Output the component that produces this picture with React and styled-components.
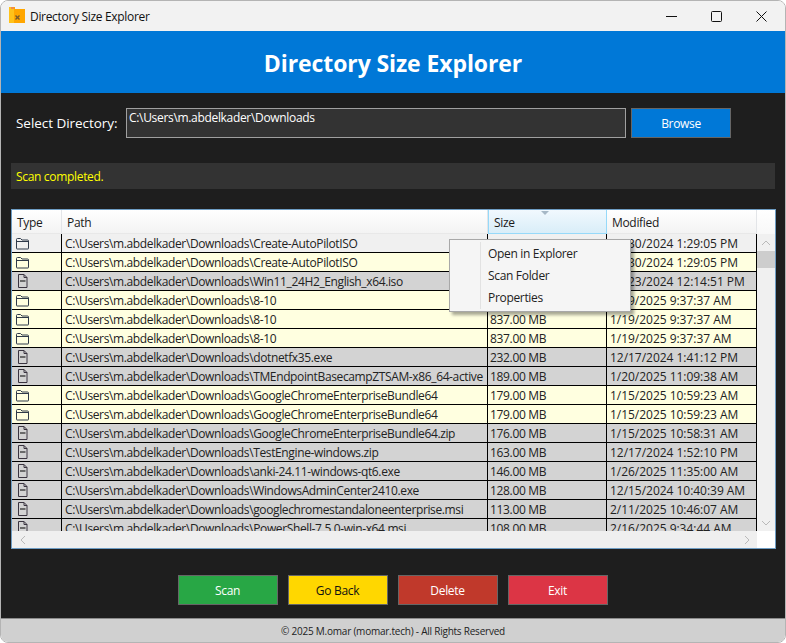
import React from "react";
import styled, { createGlobalStyle } from "styled-components";

const GlobalStyle = createGlobalStyle`
  html, body {
    margin: 0;
    padding: 0;
    background: #ffffff;
  }
  * {
    box-sizing: border-box;
  }
`;

const BASE = "C:\\Users\\m.abdelkader\\Downloads\\";

const rows = [
  { type: "folder", name: "Create-AutoPilotISO", size: "", date: "12/30/2024 1:29:05 PM", first: true },
  { type: "folder", name: "Create-AutoPilotISO", size: "", date: "12/30/2024 1:29:05 PM" },
  { type: "file", name: "Win11_24H2_English_x64.iso", size: "", date: "11/23/2024 12:14:51 PM" },
  { type: "folder", name: "8-10", size: "837.00 MB", date: "1/19/2025 9:37:37 AM" },
  { type: "folder", name: "8-10", size: "837.00 MB", date: "1/19/2025 9:37:37 AM" },
  { type: "folder", name: "8-10", size: "837.00 MB", date: "1/19/2025 9:37:37 AM" },
  { type: "file", name: "dotnetfx35.exe", size: "232.00 MB", date: "12/17/2024 1:41:12 PM" },
  { type: "file", name: "TMEndpointBasecampZTSAM-x86_64-active", size: "189.00 MB", date: "1/20/2025 11:09:38 AM" },
  { type: "folder", name: "GoogleChromeEnterpriseBundle64", size: "179.00 MB", date: "1/15/2025 10:59:23 AM" },
  { type: "folder", name: "GoogleChromeEnterpriseBundle64", size: "179.00 MB", date: "1/15/2025 10:59:23 AM" },
  { type: "file", name: "GoogleChromeEnterpriseBundle64.zip", size: "176.00 MB", date: "1/15/2025 10:58:31 AM" },
  { type: "file", name: "TestEngine-windows.zip", size: "163.00 MB", date: "12/17/2024 1:52:10 PM" },
  { type: "file", name: "anki-24.11-windows-qt6.exe", size: "146.00 MB", date: "1/26/2025 11:35:00 AM" },
  { type: "file", name: "WindowsAdminCenter2410.exe", size: "128.00 MB", date: "12/15/2024 10:40:39 AM" },
  { type: "file", name: "googlechromestandaloneenterprise.msi", size: "113.00 MB", date: "2/11/2025 10:46:07 AM" },
  { type: "file", name: "PowerShell-7.5.0-win-x64.msi", size: "108.00 MB", date: "2/16/2025 9:34:44 AM" },
];

const Window = styled.div`
  position: relative;
  width: 786px;
  height: 643px;
  display: flex;
  flex-direction: column;
  overflow: hidden;
  border: 1px solid #b4b4b4;
  border-radius: 8px;
  font-family: "Open Sans", "Noto Sans", sans-serif;
  font-size: 12px;
  letter-spacing: -0.32px;
`;

const TitleBar = styled.div`
  height: 30px;
  flex: none;
  display: flex;
  align-items: center;
  padding-left: 8px;
  background: #f2f2f2;
  color: #111;
`;

const TitleIcon = styled.svg`
  margin-top: -2px;
`;

const TitleText = styled.span`
  margin-left: 5px;
  font-size: 12px;
`;

const Controls = styled.div`
  margin-left: auto;
  display: flex;
  height: 100%;
  padding-right: 1px;
`;

const Control = styled.div`
  width: 45px;
  height: 30px;
  display: flex;
  align-items: center;
  justify-content: center;
`;

const Banner = styled.div`
  height: 62px;
  flex: none;
  display: flex;
  align-items: center;
  justify-content: center;
  padding-top: 2px;
  background: #0078d7;
  color: #fff;
  font-size: 23px;
  font-weight: 700;
  letter-spacing: -0.1px;
`;

const Main = styled.div`
  flex: 1;
  display: flex;
  flex-direction: column;
  min-height: 0;
  padding: 15px 10px 0;
  background: #1e1e1e;
`;

const PickerRow = styled.div`
  display: flex;
  align-items: center;
  height: 30px;
`;

const PickerLabel = styled.label`
  width: 115px;
  padding-left: 5px;
  color: #fff;
  font-size: 13.5px;
  letter-spacing: -0.05px;
`;

const PathInput = styled.div`
  width: 500px;
  height: 30px;
  padding: 0 2px;
  background: #333;
  border: 1px solid #a0a0a0;
  color: #fff;
`;

const Button = styled.button`
  width: 100px;
  height: 30px;
  padding: 0;
  background: ${(p) => p.$bg};
  border: 1px solid #666;
  color: ${(p) => p.$fg || "#fff"};
  font: inherit;
  letter-spacing: inherit;
`;

const BrowseButton = styled(Button)`
  margin-left: 5px;
  padding-top: 1px;
`;

const StatusBar = styled.div`
  height: 26px;
  margin-top: 25px;
  display: flex;
  align-items: center;
  padding-left: 5px;
  background: #333;
  color: #ffff00;
`;

const TableFrame = styled.div`
  height: 340px;
  width: 765px;
  margin-top: 20px;
  display: flex;
  flex-direction: column;
  background: #fff;
  border: 1px solid #6e9dc4;
`;

const HeaderRow = styled.div`
  height: 24px;
  flex: none;
  display: flex;
`;

const HeaderCell = styled.div`
  position: relative;
  width: ${(p) => p.$w}px;
  flex: none;
  display: flex;
  align-items: center;
  padding: 1px 0 0 5px;
  color: #1a1a1a;
  background: ${(p) =>
    p.$active
      ? "linear-gradient(#f1f9fe, #d9edf8)"
      : "linear-gradient(#ffffff, #f3f3f3)"};
  border-right: 1px solid ${(p) => (p.$active ? "#96d9f9" : "#e3e5e8")};
  border-left: ${(p) => (p.$active ? "1px solid #96d9f9" : "none")};
  border-bottom: 1px solid ${(p) => (p.$active ? "#96d9f9" : "#e8e8e8")};
`;

const SortArrow = styled.span`
  position: absolute;
  top: 1px;
  left: 52px;
  width: 0;
  height: 0;
  border-left: 4px solid transparent;
  border-right: 4px solid transparent;
  border-top: 4px solid #a6b8c6;
`;

const HeaderFiller = styled.div`
  flex: 1;
  background: linear-gradient(#ffffff, #f8f8f8);
`;

const BodyArea = styled.div`
  flex: 1;
  min-height: 0;
  display: flex;
`;

const RowsClip = styled.div`
  width: 745px;
  flex: none;
  overflow: hidden;
`;

const Row = styled.div`
  height: 19px;
  display: flex;
  color: #222;
  border-bottom: 1px solid #000;
  background: ${(p) =>
    p.$first ? "#f0f0f0" : p.$type === "folder" ? "#ffffe0" : "#d3d3d3"};
`;

const Cell = styled.div`
  width: ${(p) => p.$w}px;
  flex: none;
  display: flex;
  align-items: center;
  padding-left: ${(p) => p.$pad}px;
  overflow: hidden;
  white-space: nowrap;
  border-right: 1px solid #000;
`;

const PathCell = styled(Cell)`
  letter-spacing: -0.37px;
`;

const DateCell = styled(Cell)`
  letter-spacing: -0.03px;
`;

const VScroll = styled.div`
  flex: 1;
  display: flex;
  flex-direction: column;
  align-items: stretch;
  background: #f0f0f0;
`;

const ScrollThumb = styled.div`
  height: 17px;
  background: #cdcdcd;
`;

const ScrollButton = styled.div`
  height: 17px;
  display: flex;
  align-items: center;
  justify-content: center;
`;

const ScrollSpace = styled.div`
  flex: 1;
`;

const HScroll = styled.div`
  height: 17px;
  flex: none;
  display: flex;
`;

const HTrack = styled.div`
  width: 745px;
  display: flex;
  align-items: center;
  justify-content: space-between;
  padding: 0 6px 0 7px;
  background: #efefef;
`;

const ActionRow = styled.div`
  display: flex;
  justify-content: center;
  gap: 10px;
  margin-top: 26px;
  padding-right: 1px;
`;

const Footer = styled.div`
  height: 24px;
  flex: none;
  display: flex;
  align-items: center;
  justify-content: center;
  background: #d0d0d0;
  border-top: 1px solid #8c8c8c;
  color: #222;
  font-size: 10px;
  letter-spacing: -0.23px;
`;

const Menu = styled.div`
  position: absolute;
  left: 448px;
  top: 238px;
  width: 182px;
  height: 73px;
  padding: 2px 0 0 38px;
  background: #f5f5f5;
  border: 1px solid #a8a8a8;
  box-shadow: 3px 3px 3px rgba(0, 0, 0, 0.35);
  color: #222;

  &::before {
    content: "";
    position: absolute;
    left: 30px;
    top: 2px;
    bottom: 2px;
    width: 1px;
    background: #e2e2e2;
  }
`;

const MenuItem = styled.div`
  height: 22px;
  display: flex;
  align-items: center;
`;

const FolderIcon = () => (
  <svg width="15" height="13" viewBox="0 0 15 13" fill="none" stroke="#2f3a4a">
    <path d="M1.5 11.5V2.5q0-1 1-1h3l1.5 1.5h5.5q1 0 1 1v7.5q0 .5-.5.5H2q-.5 0-.5-.5z" />
    <path d="M1.5 4.5h12" />
  </svg>
);

const FileIcon = () => (
  <svg width="14" height="14" viewBox="0 0 14 14" fill="none" stroke="#3a3440">
    <path d="M3.5 .5h5.5l3 3v10h-8.5z" />
    <path d="M9 .5v3h3" />
    <rect x="5" y="6" width="5.5" height="2" fill="#6a6a6a" stroke="none" />
  </svg>
);

const AppIcon = () => (
  <TitleIcon width="16" height="16" viewBox="0 0 16 16">
    <path d="M0 0h6v2h10v14H0z" fill="#ffa600" />
    <path d="M0 0h5v16H0z" fill="#ffc21a" />
    <path d="M2 0h3v2H2z" fill="#f08a4a" />
    <path d="M6 9l1-1 1.5 1.5L10 8l1 1-1.5 1.5L11 12l-1 1-1.5-1.5L7 13l-1-1 1.5-1.5z" fill="#7a5a2a" />
  </TitleIcon>
);

const Chevron = ({ dir }) => {
  const paths = {
    up: "M1 6l4-4 4 4",
    down: "M1 2l4 4 4-4",
    left: "M6 1L2 5l4 4",
    right: "M2 1l4 4-4 4",
  };
  const size = dir === "up" || dir === "down" ? [10, 8] : [8, 10];
  return (
    <svg width={size[0]} height={size[1]} viewBox={`0 0 ${size[0]} ${size[1]}`} fill="none" stroke="#b9b9b9">
      <path d={paths[dir]} />
    </svg>
  );
};

export default function App() {
  return (
    <Window>
      <GlobalStyle />
      <TitleBar>
        <AppIcon />
        <TitleText>Directory Size Explorer</TitleText>
        <Controls>
          <Control>
            <svg width="11" height="11" viewBox="0 0 11 11" stroke="#111">
              <path d="M0 5.5h11" />
            </svg>
          </Control>
          <Control>
            <svg width="11" height="11" viewBox="0 0 11 11" fill="none" stroke="#111">
              <rect x="0.5" y="0.5" width="10" height="10" rx="1" />
            </svg>
          </Control>
          <Control>
            <svg width="11" height="11" viewBox="0 0 11 11" stroke="#111">
              <path d="M0.5 0.5l10 10M10.5 0.5l-10 10" />
            </svg>
          </Control>
        </Controls>
      </TitleBar>
      <Banner>Directory Size Explorer</Banner>
      <Main>
        <PickerRow>
          <PickerLabel>Select Directory:</PickerLabel>
          <PathInput>{BASE.slice(0, -1)}</PathInput>
          <BrowseButton $bg="#0078d7">Browse</BrowseButton>
        </PickerRow>
        <StatusBar>Scan completed.</StatusBar>
        <TableFrame>
          <HeaderRow>
            <HeaderCell $w={50}>Type</HeaderCell>
            <HeaderCell $w={426}>Path</HeaderCell>
            <HeaderCell $w={119} $active>
              <SortArrow />
              Size
            </HeaderCell>
            <HeaderCell $w={150}>Modified</HeaderCell>
            <HeaderFiller />
          </HeaderRow>
          <BodyArea>
            <RowsClip>
              {rows.map((r, i) => (
                <Row key={i} $type={r.type} $first={r.first}>
                  <Cell $w={50} $pad={3}>
                    {r.type === "folder" ? <FolderIcon /> : <FileIcon />}
                  </Cell>
                  <PathCell $w={426} $pad={3}>{BASE + r.name}</PathCell>
                  <Cell $w={119} $pad={2}>{r.size}</Cell>
                  <DateCell $w={150} $pad={3}>{r.date}</DateCell>
                </Row>
              ))}
            </RowsClip>
            <VScroll>
              <ScrollButton><Chevron dir="up" /></ScrollButton>
              <ScrollThumb />
              <ScrollSpace />
              <ScrollButton><Chevron dir="down" /></ScrollButton>
            </VScroll>
          </BodyArea>
          <HScroll>
            <HTrack>
              <Chevron dir="left" />
              <Chevron dir="right" />
            </HTrack>
          </HScroll>
        </TableFrame>
        <ActionRow>
          <Button $bg="#28a745">Scan</Button>
          <Button $bg="#ffd700" $fg="#111">Go Back</Button>
          <Button $bg="#c0392b">Delete</Button>
          <Button $bg="#dc3545">Exit</Button>
        </ActionRow>
      </Main>
      <Footer>© 2025 M.omar (momar.tech) - All Rights Reserved</Footer>
      <Menu>
        <MenuItem>Open in Explorer</MenuItem>
        <MenuItem>Scan Folder</MenuItem>
        <MenuItem>Properties</MenuItem>
      </Menu>
    </Window>
  );
}
